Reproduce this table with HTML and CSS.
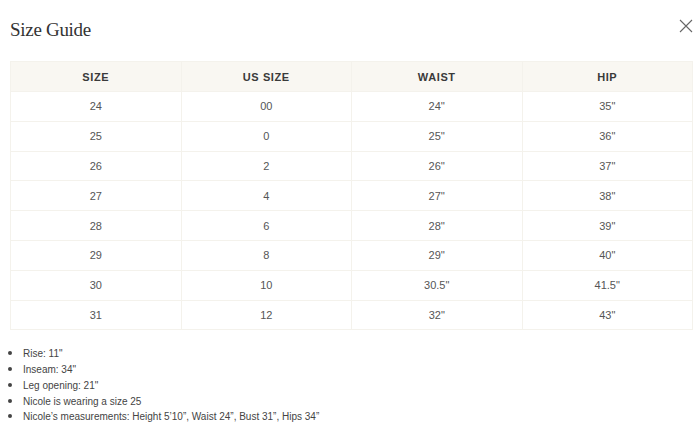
FILE: index.html
```html
<!DOCTYPE html>
<html>
<head>
<meta charset="utf-8">
<link rel="stylesheet" href="styles.css">
</head>
<body>
<div class="modal">
  <div class="head">
    <h1 class="title">Size Guide</h1>
    <button class="close" aria-label="Close">
      <svg width="14" height="14" viewBox="0 0 14 14"><path d="M1 1L13 13M13 1L1 13" stroke="#666" stroke-width="1.1" fill="none"/></svg>
    </button>
  </div>
  <table class="sizes">
    <thead>
      <tr><th>Size</th><th>US Size</th><th>Waist</th><th>Hip</th></tr>
    </thead>
    <tbody>
      <tr><td>24</td><td>00</td><td>24''</td><td>35"</td></tr>
      <tr><td>25</td><td>0</td><td>25''</td><td>36"</td></tr>
      <tr><td>26</td><td>2</td><td>26''</td><td>37"</td></tr>
      <tr><td>27</td><td>4</td><td>27''</td><td>38"</td></tr>
      <tr><td>28</td><td>6</td><td>28''</td><td>39"</td></tr>
      <tr><td>29</td><td>8</td><td>29''</td><td>40"</td></tr>
      <tr><td>30</td><td>10</td><td>30.5"</td><td>41.5"</td></tr>
      <tr><td>31</td><td>12</td><td>32"</td><td>43"</td></tr>
    </tbody>
  </table>
  <ul class="notes">
    <li>Rise: 11"</li>
    <li>Inseam: 34"</li>
    <li>Leg opening: 21"</li>
    <li>Nicole is wearing a size 25</li>
    <li>Nicole’s measurements: Height 5’10”, Waist 24”, Bust 31”, Hips 34”</li>
  </ul>
</div>
</body>
</html>
```
FILE: styles.css
```css
html, body {
  margin: 0;
  padding: 0;
  background: #fff;
}
.modal {
  padding: 0 7px 0 10px;
  font-family: "Liberation Sans", Arial, sans-serif;
  color: #444;
}
.head {
  display: flex;
  justify-content: space-between;
  align-items: flex-start;
  height: 61px;
}
.title {
  margin: 18px 0 0 0;
  font-family: "Liberation Serif", "Times New Roman", serif;
  font-weight: normal;
  font-size: 19px;
  letter-spacing: -0.3px;
  color: #333;
  line-height: 24px;
}
.close {
  margin: 19px 0 0 0;
  padding: 0;
  border: 0;
  background: none;
  width: 14px;
  height: 14px;
  display: flex;
}
.sizes {
  width: 683px;
  border-collapse: collapse;
  table-layout: fixed;
}
.sizes th, .sizes td {
  border: 1px solid #f4f2ec;
  text-align: center;
  height: 28.8px;
  padding: 0;
  font-size: 11px;
}
.sizes th {
  background: #f9f7f2;
  font-weight: bold;
  text-transform: uppercase;
  letter-spacing: 0.6px;
  color: #3a3a3a;
  height: 29px;
}
.sizes td {
  color: #555;
}
.notes {
  margin: 16px 0 0 0;
  padding: 0 0 0 13px;
  font-size: 10px;
  line-height: 14.75px;
  color: #444;
}
.notes li::marker {
  font-size: 13px;
}
```
